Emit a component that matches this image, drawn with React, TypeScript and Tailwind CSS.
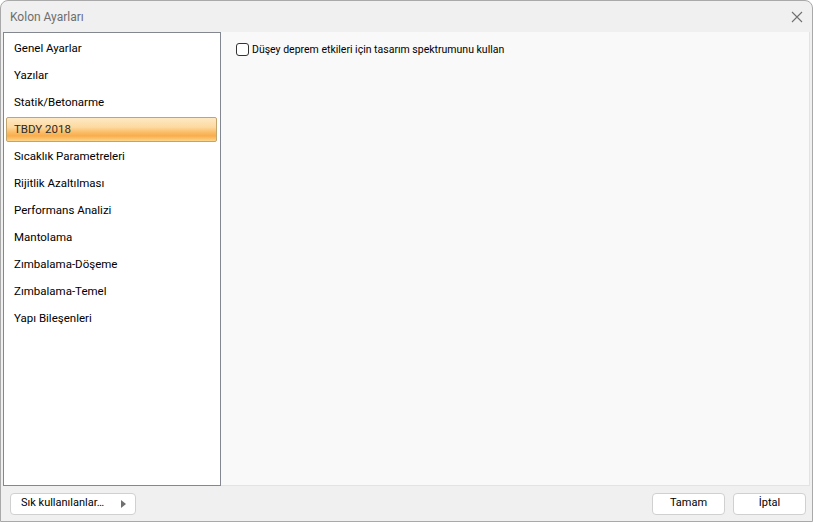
import React from 'react';

const items = [
  'Genel Ayarlar',
  'Yazılar',
  'Statik/Betonarme',
  'TBDY 2018',
  'Sıcaklık Parametreleri',
  'Rijitlik Azaltılması',
  'Performans Analizi',
  'Mantolama',
  'Zımbalama-Döşeme',
  'Zımbalama-Temel',
  'Yapı Bileşenleri',
];

const font = { fontFamily: '"Segoe UI", Roboto, "Noto Sans", "Liberation Sans", sans-serif' };

function App() {
  const [selected, setSelected] = React.useState(3);
  const [checked, setChecked] = React.useState(false);

  return (
    <div className="w-[813px] h-[522px] bg-[#f0f0f0] border border-[#a9a9a9] rounded-t-[8px] flex flex-col overflow-hidden text-[11.5px] text-black" style={font}>
      <div className="h-[31px] shrink-0 flex items-center justify-between pl-[9px] pr-[8px]">
        <span className="text-[12px] text-[#6e6e6e]">Kolon Ayarları</span>
        <svg width="12" height="12" viewBox="0 0 12 12" className="mr-[1px]">
          <path d="M1 1L11 11M11 1L1 11" stroke="#707070" strokeWidth="1.1" fill="none" />
        </svg>
      </div>

      <div className="flex flex-1 min-h-0 pl-[2px] pr-[2px]">
        <div className="w-[218px] shrink-0 bg-white border border-[#828790] pt-[2px] pl-[2px] pr-[3px]">
          {items.map((it, i) => (
            <div
              key={it}
              onClick={() => setSelected(i)}
              className={
                i === selected
                  ? 'h-[25px] my-[1px] flex items-center pl-[7px] rounded-[2px] border border-[#c2a46e] bg-[linear-gradient(to_bottom,#fee9c4_0%,#fdd9a0_40%,#fbbf6a_60%,#f9ad4c_78%,#fcd68b_100%)] text-[#2a2a2a] cursor-default'
                  : 'h-[27px] flex items-center pl-[8px] cursor-default'
              }
            >
              {it}
            </div>
          ))}
        </div>
        <div className="flex-1 bg-[#f9f9f9] border-r border-b border-[#e3e3e3] pt-[10px] pl-[15px]">
          <label className="flex items-center gap-[3px] cursor-default">
            <span
              onClick={() => setChecked(!checked)}
              className="w-[13px] h-[13px] rounded-[3px] border border-[#333333] bg-white flex items-center justify-center"
            >
              {checked && (
                <svg width="9" height="9" viewBox="0 0 9 9">
                  <path d="M1 4.5L3.5 7L8 1.5" stroke="#000" strokeWidth="1.3" fill="none" />
                </svg>
              )}
            </span>
            <span className="text-[10.5px]">Düşey deprem etkileri için tasarım spektrumunu kullan</span>
          </label>
        </div>
      </div>

      <div className="h-[35px] shrink-0 flex items-center justify-between pl-[9px] pr-[6px]">
        <button className="w-[126px] h-[22px] rounded-[4px] border border-[#d0d0d0] bg-white flex items-center justify-between pl-[10px] pr-[9px] text-[11px]">
          <span>Sık kullanılanlar…</span>
          <svg width="5" height="8" viewBox="0 0 5 8">
            <path d="M0 0L5 4L0 8Z" fill="#707070" />
          </svg>
        </button>
        <div className="flex gap-[8px] text-[11px]">
          <button className="w-[73px] h-[22px] rounded-[4px] border border-[#d0d0d0] bg-white">Tamam</button>
          <button className="w-[73px] h-[22px] rounded-[4px] border border-[#d0d0d0] bg-white">İptal</button>
        </div>
      </div>
    </div>
  );
}

export default App;
